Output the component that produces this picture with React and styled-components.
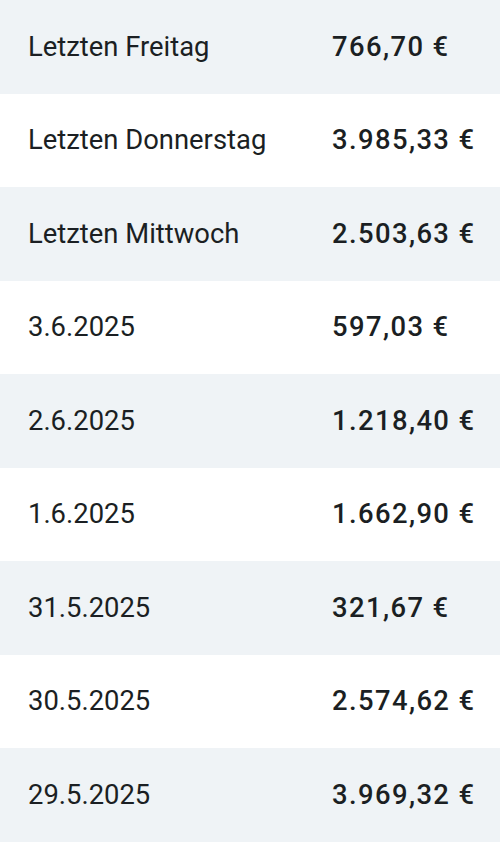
import React from 'react';
import styled, { createGlobalStyle } from 'styled-components';

const GlobalStyle = createGlobalStyle`
    html, body {
        margin: 0;
        padding: 0;
        background: #ffffff;
    }
    body {
        font-family: Roboto, "Noto Sans", sans-serif;
        -webkit-font-smoothing: antialiased;
    }
`;

const List = styled.div`
    display: flex;
    flex-direction: column;
    width: 500px;
`;

const Row = styled.div`
    display: grid;
    grid-template-columns: 304px 1fr;
    align-items: center;
    height: 93.5px;
    padding-left: 28px;
    box-sizing: border-box;
    background: ${props => (props.shaded ? '#eff3f6' : '#ffffff')};
`;

const Label = styled.div`
    font-size: 27.4px;
    font-weight: 400;
    color: #1b1f23;
`;

const Amount = styled.div`
    font-size: 27.4px;
    font-weight: 500;
    color: #1b1f23;
    letter-spacing: 1.4px;
`;

const rows = [
    { label: 'Letzten Freitag', amount: '766,70 €' },
    { label: 'Letzten Donnerstag', amount: '3.985,33 €' },
    { label: 'Letzten Mittwoch', amount: '2.503,63 €' },
    { label: '3.6.2025', amount: '597,03 €' },
    { label: '2.6.2025', amount: '1.218,40 €' },
    { label: '1.6.2025', amount: '1.662,90 €' },
    { label: '31.5.2025', amount: '321,67 €' },
    { label: '30.5.2025', amount: '2.574,62 €' },
    { label: '29.5.2025', amount: '3.969,32 €' },
];

const App = () => (
    <React.Fragment>
        <GlobalStyle />
        <List>
            {rows.map((row, i) => (
                <Row key={row.label} shaded={i % 2 === 0}>
                    <Label>{row.label}</Label>
                    <Amount>{row.amount}</Amount>
                </Row>
            ))}
        </List>
    </React.Fragment>
);

export default App;
